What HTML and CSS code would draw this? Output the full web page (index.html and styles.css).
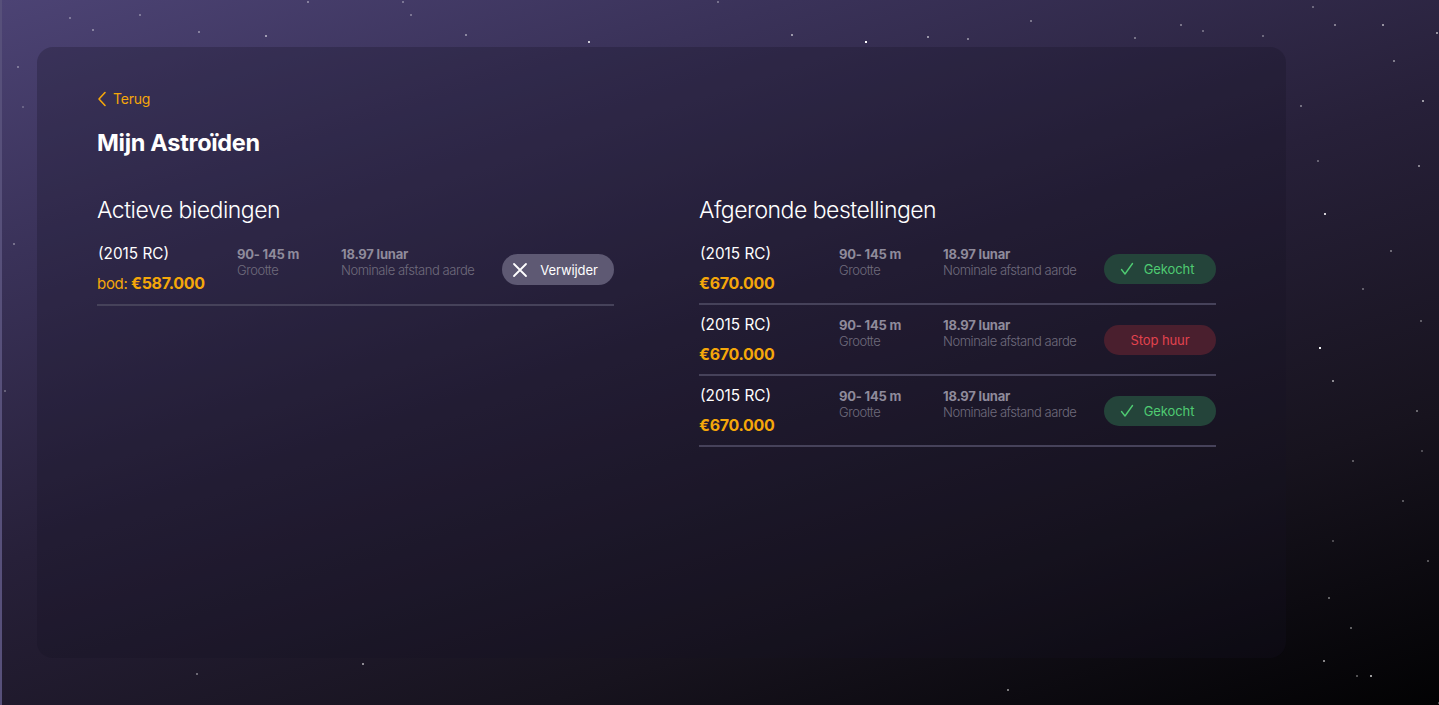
FILE: index.html
```html
<!DOCTYPE html>
<html lang="nl">
<head>
<meta charset="utf-8">
<title>Mijn Astroïden</title>
<link rel="stylesheet" href="styles.css">
</head>
<body>
<div class="stars" aria-hidden="true"></div>
<div class="page">
  <main class="panel">
    <a class="back" href="#">
      <svg class="back-icon" width="10" height="16" viewBox="0 0 10 16"><polyline points="8,1.5 2,8 8,14.5" fill="none" stroke="#f5a70a" stroke-width="1.6" stroke-linecap="round" stroke-linejoin="round"/></svg>
      <span>Terug</span>
    </a>
    <h1 class="title">Mijn Astroïden</h1>
    <div class="columns">
      <section class="col">
        <h2 class="heading">Actieve biedingen</h2>
        <div class="row">
          <div class="c-name">
            <div class="name">(2015 RC)</div>
            <div class="price"><span class="bod">bod:</span> €587.000</div>
          </div>
          <div class="c-size">
            <div class="val">90- 145 m</div>
            <div class="lbl">Grootte</div>
          </div>
          <div class="c-dist">
            <div class="val">18.97 lunar</div>
            <div class="lbl">Nominale afstand aarde</div>
          </div>
          <button class="btn btn-remove">
            <svg width="16" height="16" viewBox="0 0 16 16"><path d="M2 2 L14 14 M14 2 L2 14" stroke="#fff" stroke-width="1.8" stroke-linecap="round"/></svg>
            <span>Verwijder</span>
          </button>
        </div>
      </section>
      <section class="col">
        <h2 class="heading">Afgeronde bestellingen</h2>
        <div class="row">
          <div class="c-name">
            <div class="name">(2015 RC)</div>
            <div class="price">€670.000</div>
          </div>
          <div class="c-size">
            <div class="val">90- 145 m</div>
            <div class="lbl">Grootte</div>
          </div>
          <div class="c-dist">
            <div class="val">18.97 lunar</div>
            <div class="lbl">Nominale afstand aarde</div>
          </div>
          <button class="btn btn-bought">
            <svg width="14" height="14" viewBox="0 0 14 14"><polyline points="1.5,7.5 5,12 12.5,1.5" fill="none" stroke="#4fcb72" stroke-width="1.4" stroke-linecap="round" stroke-linejoin="round"/></svg>
            <span>Gekocht</span>
          </button>
        </div>
        <div class="row">
          <div class="c-name">
            <div class="name">(2015 RC)</div>
            <div class="price">€670.000</div>
          </div>
          <div class="c-size">
            <div class="val">90- 145 m</div>
            <div class="lbl">Grootte</div>
          </div>
          <div class="c-dist">
            <div class="val">18.97 lunar</div>
            <div class="lbl">Nominale afstand aarde</div>
          </div>
          <button class="btn btn-stop">
            <span>Stop huur</span>
          </button>
        </div>
        <div class="row">
          <div class="c-name">
            <div class="name">(2015 RC)</div>
            <div class="price">€670.000</div>
          </div>
          <div class="c-size">
            <div class="val">90- 145 m</div>
            <div class="lbl">Grootte</div>
          </div>
          <div class="c-dist">
            <div class="val">18.97 lunar</div>
            <div class="lbl">Nominale afstand aarde</div>
          </div>
          <button class="btn btn-bought">
            <svg width="14" height="14" viewBox="0 0 14 14"><polyline points="1.5,7.5 5,12 12.5,1.5" fill="none" stroke="#4fcb72" stroke-width="1.4" stroke-linecap="round" stroke-linejoin="round"/></svg>
            <span>Gekocht</span>
          </button>
        </div>
      </section>
    </div>
  </main>
</div>
</body>
</html>
```

FILE: styles.css
```css
* { box-sizing: border-box; }
html, body { margin: 0; padding: 0; }
body {
  width: 1439px;
  height: 705px;
  overflow: hidden;
  position: relative;
  font-family: Inter, "Noto Sans", "Liberation Sans", sans-serif;
  color: #fff;
  background: linear-gradient(162deg, #4c4374 0%, #3a3259 22%, #272039 48%, #17131e 75%, #020203 100%);
  border-left: 2px solid #57507a;
}
.stars {
  position: absolute;
  left: 0; top: 0;
  width: 2px; height: 2px;
  background: transparent;
  box-shadow:
    305px 1px rgba(255,255,255,.35), 400px 1px rgba(255,255,255,.3), 715px 1px rgba(255,255,255,.3),
    263px 35px rgba(255,255,255,.5), 196px 31px rgba(255,255,255,.35), 789px 34px rgba(255,255,255,.5),
    586px 41px rgba(255,255,255,.75), 863px 41px rgba(255,255,255,1), 925px 36px rgba(255,255,255,.5),
    965px 38px rgba(255,255,255,.4), 408px 14px rgba(255,255,255,.3), 463px 34px rgba(255,255,255,.4),
    1028px 20px rgba(255,255,255,.35), 1178px 24px rgba(255,255,255,.35), 1332px 24px rgba(255,255,255,.4),
    1380px 24px rgba(255,255,255,.5), 1434px 32px rgba(255,255,255,.5), 1391px 60px rgba(255,255,255,.4),
    1420px 100px rgba(255,255,255,.55), 1298px 105px rgba(255,255,255,.35), 1315px 160px rgba(255,255,255,.3),
    1416px 165px rgba(255,255,255,.45), 1322px 213px rgba(255,255,255,.8), 1388px 250px rgba(255,255,255,.35),
    1360px 288px rgba(255,255,255,.3), 1418px 320px rgba(255,255,255,.3), 1317px 347px rgba(255,255,255,.95),
    1330px 380px rgba(255,255,255,.5), 1414px 410px rgba(255,255,255,.35), 1350px 460px rgba(255,255,255,.3),
    1400px 500px rgba(255,255,255,.3), 1330px 540px rgba(255,255,255,.25), 1425px 560px rgba(255,255,255,.3),
    1326px 597px rgba(255,255,255,.35), 1348px 627px rgba(255,255,255,.35), 1321px 660px rgba(255,255,255,.5),
    1354px 675px rgba(255,255,255,.3), 1368px 675px rgba(255,255,255,.6), 1436px 702px rgba(255,255,255,.3),
    1005px 689px rgba(255,255,255,.45), 360px 663px rgba(255,255,255,.5), 194px 673px rgba(255,255,255,.35),
    15px 66px rgba(255,255,255,.3), 67px 17px rgba(255,255,255,.3), 20px 106px rgba(255,255,255,.2),
    11px 243px rgba(255,255,255,.3), 2px 390px rgba(255,255,255,.25), 90px 29px rgba(255,255,255,.35),
    137px 14px rgba(255,255,255,.3), 1200px 30px rgba(255,255,255,.3), 1310px 6px rgba(255,255,255,.3),
    1260px 35px rgba(255,255,255,.3), 1132px 37px rgba(255,255,255,.35), 1419px 450px rgba(255,255,255,.25);
}
.page {
  padding: 47px 153px 47px 35px;
  height: 705px;
}
.panel {
  height: 611px;
  border-radius: 16px;
  background: rgba(22, 18, 36, 0.28);
  padding: 43px 60px 40px 60px;
}
.back {
  display: inline-flex;
  align-items: center;
  gap: 6px;
  color: #f5a70a;
  text-decoration: none;
  font-size: 14px;
  line-height: 18px;
  height: 18px;
  letter-spacing: -0.2px;
}
.back-icon { display: block; }
.title {
  margin: 17px 0 0 0;
  font-size: 23.5px;
  line-height: 30px;
  font-weight: 700;
  letter-spacing: -0.3px;
}
.columns {
  display: flex;
  gap: 85px;
  margin-top: 37px;
}
.col { width: 517px; }
.heading {
  margin: 0 0 9px 0;
  font-size: 23px;
  line-height: 30px;
  font-weight: 300;
  letter-spacing: -0.5px;
}
.col + .col .row { width: 517px; }
.row {
  display: flex;
  align-items: flex-start;
  padding: 11px 0 10px 1px;
  border-bottom: 2px solid #46425a;
}
.c-name { width: 139px; }
.c-size { width: 104px; }
.name {
  font-size: 15.3px;
  line-height: 18px;
  font-weight: 400;
  color: #fff;
}
.price {
  margin-top: 10px;
  font-size: 16px;
  line-height: 20px;
  font-weight: 700;
  color: #f5a70a;
  margin-left: -1px;
  letter-spacing: -0.3px;
}
.bod { font-weight: 400; font-size: 15px; }
.val {
  font-size: 13px;
  line-height: 16px;
  font-weight: 700;
  color: #8f8b9b;
  margin-top: 1px;
  letter-spacing: -0.2px;
}
.lbl {
  font-size: 13px;
  line-height: 16px;
  font-weight: 300;
  color: #6f6b7c;
  letter-spacing: -0.45px;
}
.btn {
  margin-left: auto;
  align-self: center;
  width: 112px;
  height: 31px;
  border: none;
  border-radius: 16px;
  font-family: inherit;
  font-size: 13px;
  display: flex;
  align-items: center;
  justify-content: center;
  gap: 12px;
  padding: 0;
  letter-spacing: -0.1px;
}
.btn-remove { background: #5e5973; color: #fff; padding-right: 6px; }
.btn-bought { background: #24443a; color: #4fcb72; height: 30px; gap: 10px; padding-right: 6px; }
.btn-stop { background: #4a1f2e; color: #e2434e; height: 30px; }
.btn span { line-height: 16px; }
```
